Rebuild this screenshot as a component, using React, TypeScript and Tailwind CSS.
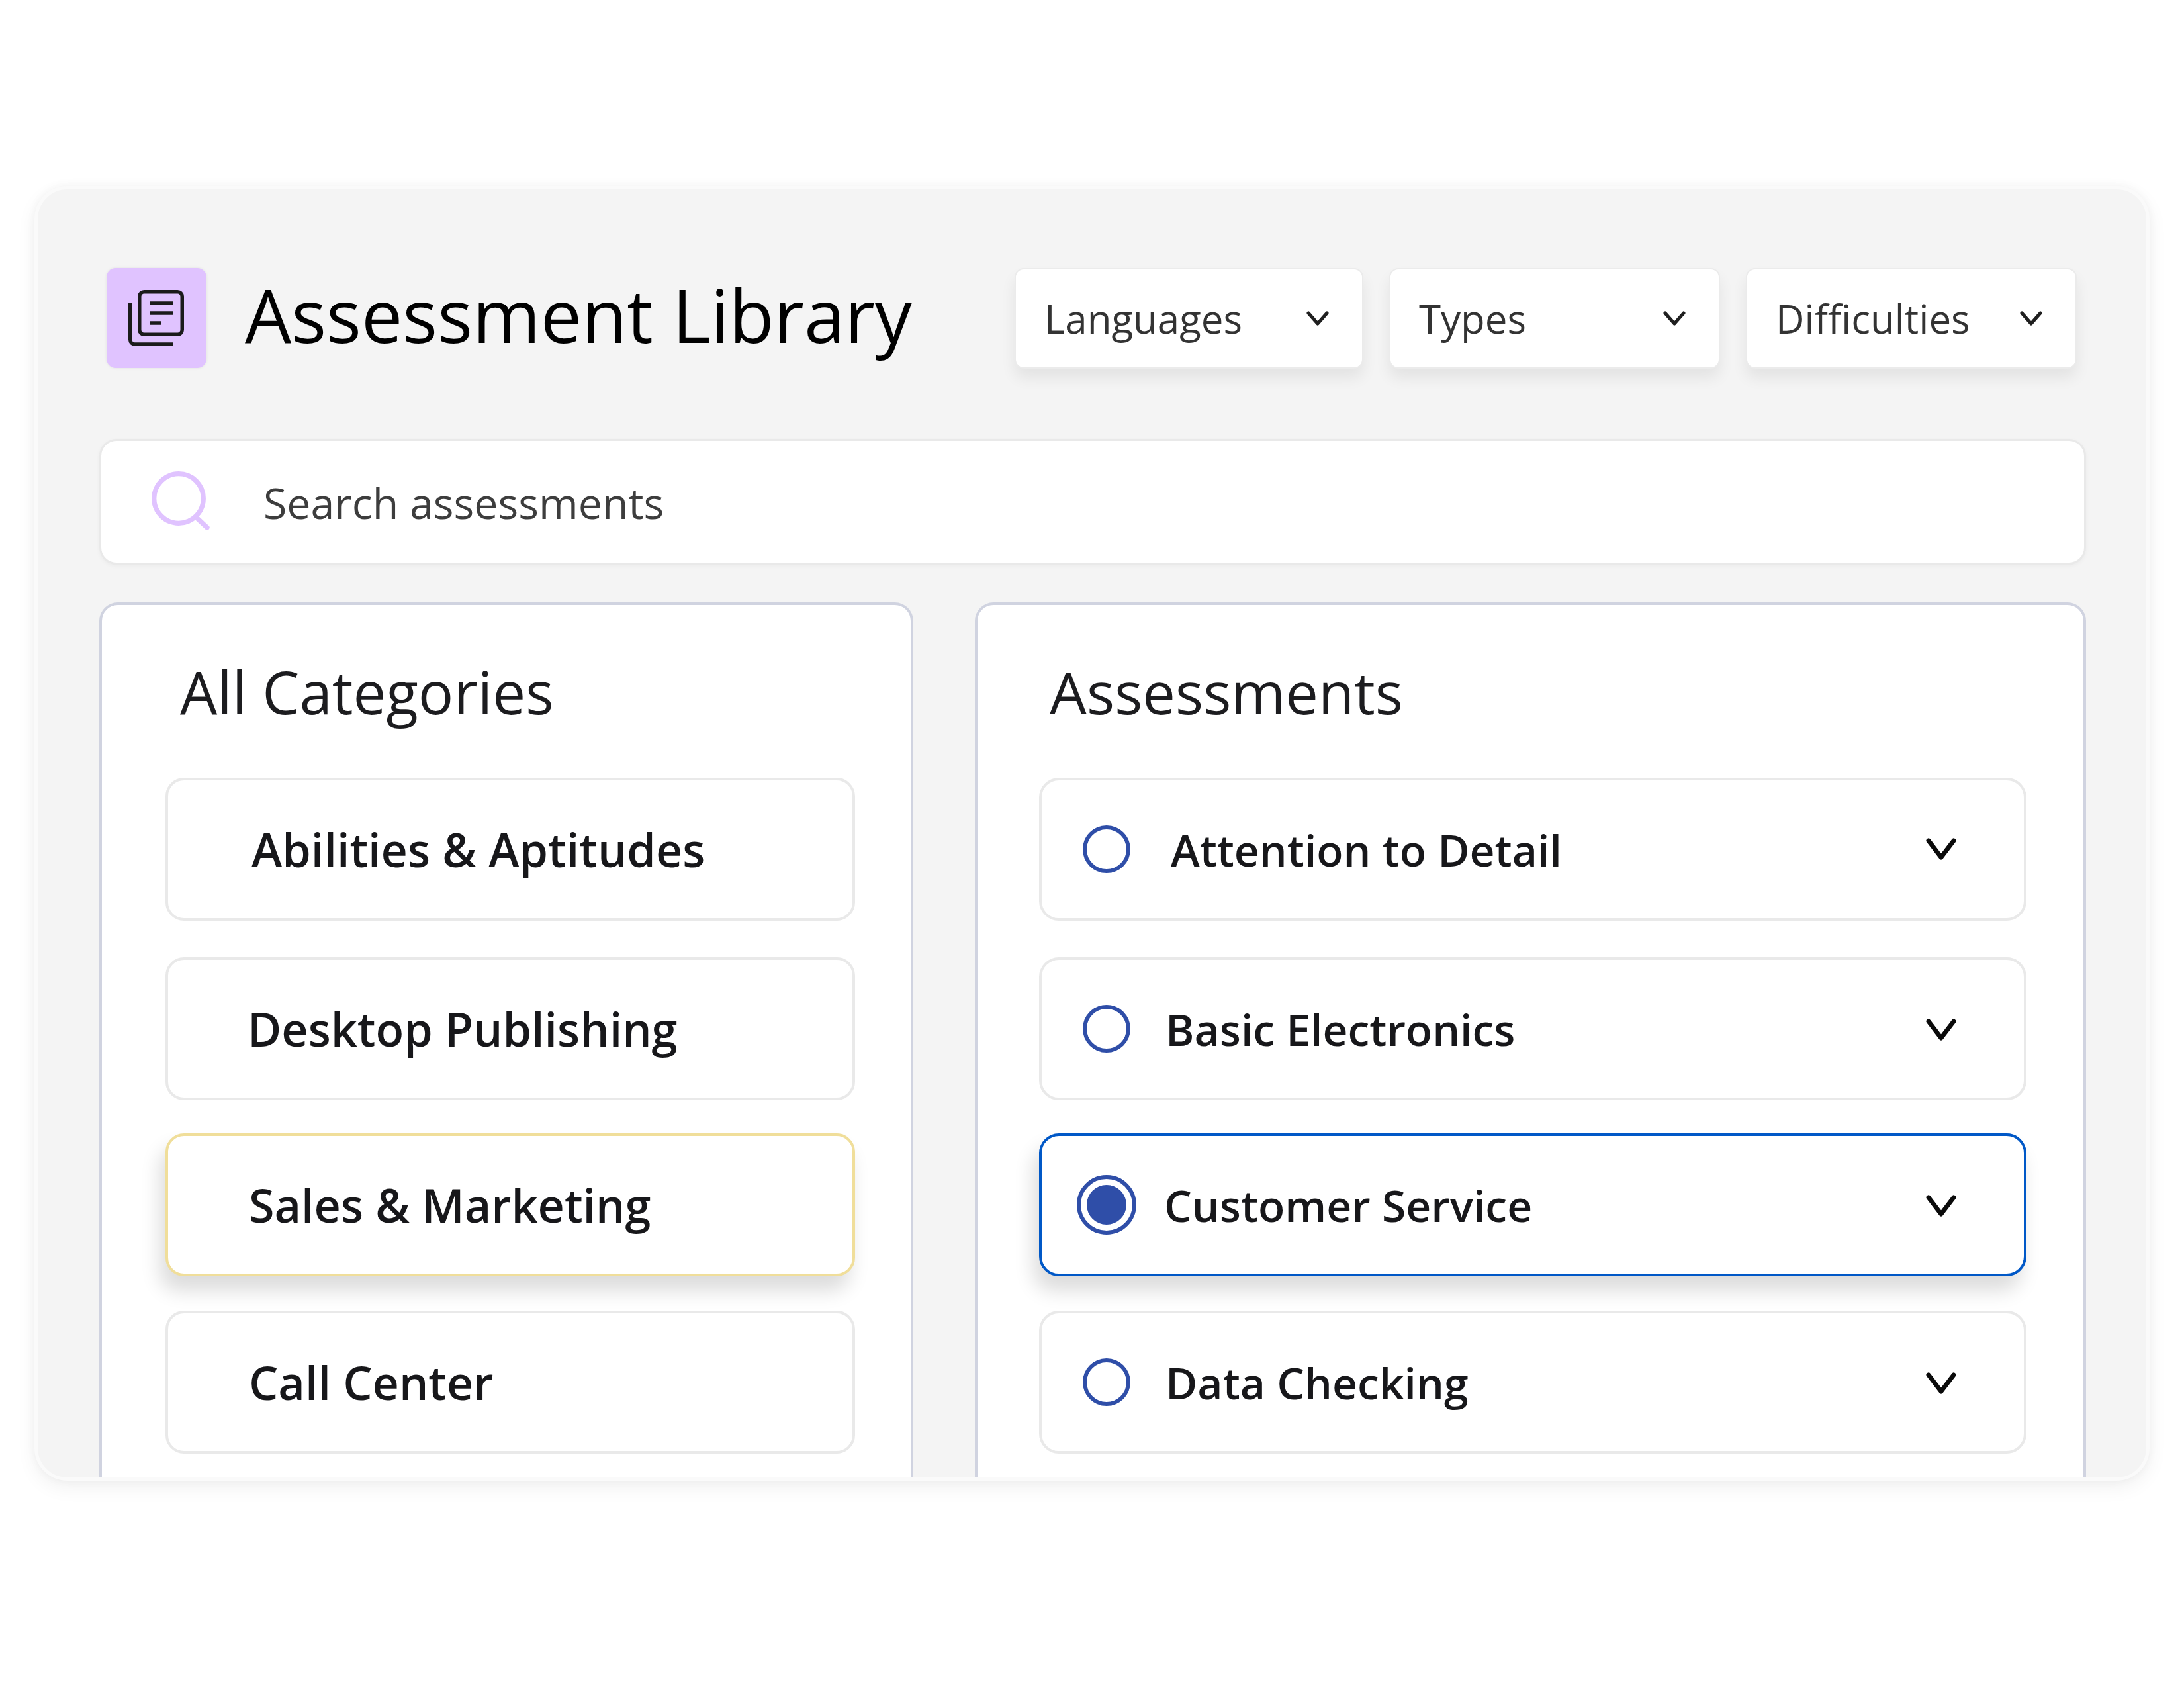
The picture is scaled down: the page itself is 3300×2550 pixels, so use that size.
const FONT = "font-['Open_Sans',sans-serif]";

function SmallChevron() {
  return (
    <svg viewBox="0 0 34 24" className="w-[34px] h-[24px]" fill="none" stroke="#1f1f1f" strokeWidth="5" strokeLinecap="round" strokeLinejoin="round">
      <path d="M3 4 L17 20 L31 4" />
    </svg>
  );
}

function BigChevron({ down }: { down?: boolean }) {
  return (
    <svg viewBox="0 0 46 34" className={`w-[46px] h-[34px] ${down ? "mt-[4px]" : "mt-0"}`} fill="none" stroke="#0a0a0a" strokeWidth="7" strokeLinecap="round" strokeLinejoin="round">
      <path d="M4 4 L23 29 L42 4" />
    </svg>
  );
}

function Dropdown({ label, w }: { label: string; w: string }) {
  return (
    <div className={`${w} h-[152px] flex items-center justify-between bg-white border-2 border-[#ebebeb] rounded-[14px] shadow-[0_14px_22px_rgba(0,0,0,0.07)] pl-[43px] pr-[50px]`}>
      <span className="text-[60px] leading-none font-medium text-[#333333]">{label}</span>
      <SmallChevron />
    </div>
  );
}

function Category({ label, pl, selected, mt }: { label: string; pl: string; selected?: boolean; mt: string }) {
  return (
    <div
      className={`${mt} ${pl} h-[216px] flex items-center bg-white rounded-[28px] border-[4px] ${
        selected ? "border-[#f0de9a] shadow-[-8px_22px_30px_rgba(0,0,0,0.14)]" : "border-[#e9e9e9]"
      }`}
    >
      <span className="text-[70px] leading-none font-semibold text-[#17171a]">{label}</span>
    </div>
  );
}

function Radio({ selected }: { selected?: boolean }) {
  if (selected) {
    return (
      <div className="w-[90px] h-[90px] rounded-full border-[6px] border-[#2f4ea8] flex items-center justify-center">
        <div className="w-[60px] h-[60px] rounded-full bg-[#2f4ea8]" />
      </div>
    );
  }
  return <div className="w-[72px] h-[72px] mx-[9px] rounded-full border-[6px] border-[#2f4ea8]" />;
}

function Assessment({ label, gap, selected, mt, down }: { label: string; gap: string; selected?: boolean; mt: string; down?: boolean }) {
  return (
    <div
      className={`${mt} h-[216px] flex items-center bg-white rounded-[30px] border-[4px] pl-[53px] pr-[102px] ${
        selected ? "border-[#0058c7] shadow-[-8px_22px_30px_rgba(0,0,0,0.14)]" : "border-[#e9e9e9]"
      }`}
    >
      <Radio selected={selected} />
      <span className={`${gap} flex-1 text-[66px] leading-none font-semibold text-[#17171a]`}>{label}</span>
      <BigChevron down={down} />
    </div>
  );
}

export default function App() {
  return (
    <div className={`${FONT} w-[3300px] h-[2550px] bg-white pt-[281px] pl-[52px]`}>
      <div className="w-[3196px] h-[1956px] bg-[#f4f4f4] border-[5px] border-[#fafafa] rounded-[50px] shadow-[0_0_14px_rgba(0,0,0,0.04),0_10px_30px_rgba(0,0,0,0.06)] overflow-hidden flex flex-col pt-[119px] pl-[93px]">
        <div className="flex items-center h-[151px] w-[2988px] pl-[11px]">
          <div className="w-[151px] h-[151px] rounded-[14px] bg-[#e0c3ff] shrink-0 shadow-[0_0_4px_rgba(0,0,0,0.08)]">
            <svg viewBox="0 0 151 151" className="w-[151px] h-[151px]" fill="none" stroke="#1b1b1b" strokeWidth="5.5">
              <rect x="49.75" y="35.75" width="64.5" height="64.5" rx="7" />
              <path d="M65 53 H100 M65 68 H100 M65 83 H83" />
              <path d="M35.7 52 V108 a7 7 0 0 0 7 7 H100" />
            </svg>
          </div>
          <h1 className="ml-[58px] pb-[10px] flex-1 text-[111px] leading-none font-normal text-black">Assessment Library</h1>
          <div className="flex gap-[39px]">
            <Dropdown label="Languages" w="w-[527px]" />
            <Dropdown label="Types" w="w-[500px]" />
            <Dropdown label="Difficulties" w="w-[500px]" />
          </div>
        </div>

        <div className="mt-[107px] w-[3002px] h-[190px] shrink-0 flex items-center bg-white border-[3px] border-[#e9e9e9] rounded-[26px] pl-[72px] shadow-[0_2px_6px_rgba(0,0,0,0.04)]">
          <svg viewBox="0 0 100 100" className="w-[100px] h-[100px] shrink-0" fill="none" stroke="#e0c3ff" strokeWidth="7.3" strokeLinecap="round">
            <circle cx="45" cy="45" r="37.3" />
            <path d="M72 74 L88 89" />
          </svg>
          <span className="ml-[73px] pt-[2px] text-[64.5px] leading-none text-[#3d3d3d]">Search assessments</span>
        </div>

        <div className="mt-[57px] flex gap-[93px] flex-1 min-h-0">
          <div className="w-[1230px] bg-white border-[4px] border-b-0 border-[#d0d3e0] rounded-t-[28px] pl-[96px]">
            <h2 className="ml-[22px] mt-[71px] text-[89px] leading-[120px] font-normal text-[#1c1c1f]">All Categories</h2>
            <div className="w-[1042px] mt-[70px]">
              <Category mt="mt-0" pl="pl-[126px]" label="Abilities & Aptitudes" />
              <Category mt="mt-[55px]" pl="pl-[120px]" label="Desktop Publishing" />
              <Category mt="mt-[50px]" pl="pl-[122px]" selected label="Sales & Marketing" />
              <Category mt="mt-[52px]" pl="pl-[122px]" label="Call Center" />
            </div>
          </div>
          <div className="w-[1679px] bg-white border-[4px] border-b-0 border-[#d0d3e0] rounded-t-[28px] pl-[93px]">
            <h2 className="ml-[16px] mt-[71px] text-[88.5px] leading-[120px] font-normal text-[#1c1c1f]">Assessments</h2>
            <div className="w-[1492px] mt-[70px]">
              <Assessment mt="mt-0" gap="ml-[52px]" label="Attention to Detail" />
              <Assessment mt="mt-[55px]" gap="ml-[44px]" down label="Basic Electronics" />
              <Assessment mt="mt-[50px]" gap="ml-[42px]" down selected label="Customer Service" />
              <Assessment mt="mt-[52px]" gap="ml-[44px]" down label="Data Checking" />
            </div>
          </div>
        </div>
      </div>
    </div>
  );
}
